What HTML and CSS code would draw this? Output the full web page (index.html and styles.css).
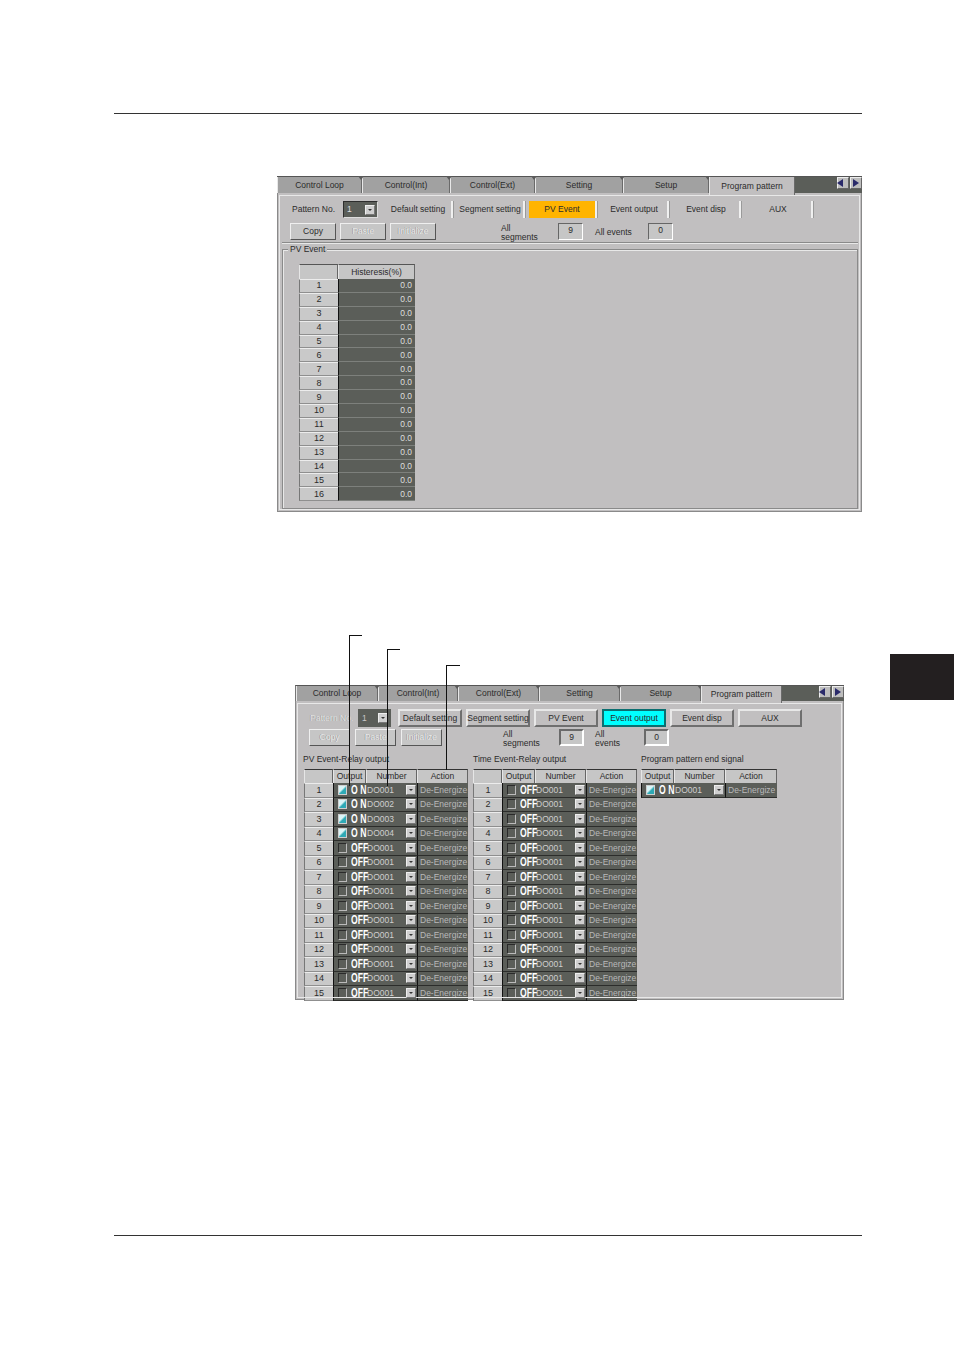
FILE: index.html
```html
<!DOCTYPE html>
<html lang="en">
<head>
<meta charset="utf-8">
<title>Program pattern</title>
<link rel="stylesheet" href="styles.css">
</head>
<body>
<div class="page">
<div class="rule rule-top"></div>

<section class="shot shot-a">
  <div class="tabs tabs-a">
    <div class="tab">Control Loop</div><div class="tab">Control(Int)</div><div class="tab">Control(Ext)</div><div class="tab">Setting</div><div class="tab">Setup</div><div class="tab tab-on">Program pattern</div>
    <div class="tabfill"><span class="arr arr-l"></span><span class="arr arr-r"></span></div>
  </div>
  <div class="panel panel-a">
    <div class="bar bar-a1">
      <span class="lbl lbl-pat">Pattern No.</span>
      <span class="sel"><span>1</span><b class="dd"></b></span>
      <span class="btn flat">Default setting</span><span class="btn flat">Segment setting</span><span class="btn flat orange">PV Event</span><span class="btn flat">Event output</span><span class="btn flat">Event disp</span><span class="btn flat">AUX</span>
    </div>
    <div class="bar bar-a2">
      <span class="btn raised">Copy</span><span class="btn raised dim">Paste</span><span class="btn raised dim">Initialize</span>
      <span class="lbl lbl-seg">All segments</span><span class="val">9</span>
      <span class="lbl lbl-ev">All events</span><span class="val">0</span>
    </div>
    <div class="group">
      <span class="legend">PV Event</span>
      <div class="ptable">
        <div class="h"></div><div class="h">Histeresis(%)</div>
        <div class="i">1</div><div class="v">0.0</div>
        <div class="i">2</div><div class="v">0.0</div>
        <div class="i">3</div><div class="v">0.0</div>
        <div class="i">4</div><div class="v">0.0</div>
        <div class="i">5</div><div class="v">0.0</div>
        <div class="i">6</div><div class="v">0.0</div>
        <div class="i">7</div><div class="v">0.0</div>
        <div class="i">8</div><div class="v">0.0</div>
        <div class="i">9</div><div class="v">0.0</div>
        <div class="i">10</div><div class="v">0.0</div>
        <div class="i">11</div><div class="v">0.0</div>
        <div class="i">12</div><div class="v">0.0</div>
        <div class="i">13</div><div class="v">0.0</div>
        <div class="i">14</div><div class="v">0.0</div>
        <div class="i">15</div><div class="v">0.0</div>
        <div class="i">16</div><div class="v">0.0</div>
      </div>
    </div>
  </div>
</section>

<section class="shot shot-b">
  <i class="callout c1"></i><i class="callout c2"></i><i class="callout c3"></i>
  <div class="tabs tabs-b">
    <div class="tab">Control Loop</div><div class="tab">Control(Int)</div><div class="tab">Control(Ext)</div><div class="tab">Setting</div><div class="tab">Setup</div><div class="tab tab-on">Program pattern</div>
    <div class="tabfill"><span class="arr arr-l"></span><span class="arr arr-r"></span></div>
  </div>
  <div class="panel panel-b">
    <div class="bar bar-b1">
      <span class="lbl lbl-patb dimtext">Pattern No.</span>
      <span class="sel selb"><span>1</span><b class="dd"></b></span>
      <span class="btn box">Default setting</span><span class="btn box">Segment setting</span><span class="btn box">PV Event</span><span class="btn box cyan">Event output</span><span class="btn box">Event disp</span><span class="btn box">AUX</span>
    </div>
    <div class="bar bar-b2">
      <span class="btn raised dim">Copy</span><span class="btn raised dim">Paste</span><span class="btn raised dim">Initialize</span>
      <span class="lbl lbl-segb">All segments</span><span class="val valb">9</span>
      <span class="lbl lbl-evb">All events</span><span class="val valb">0</span>
    </div>
    <div class="tables">
      <div class="tblwrap">
        <div class="ttl">PV Event-Relay output</div>
        <div class="rt">
          <div class="h"></div><div class="h">Output</div><div class="h">Number</div><div class="h">Action</div>
          <div class="i">1</div><div class="o"><span class="cb on"></span><span class="st son">ON</span></div><div class="n">DO001<b class="dd"></b></div><div class="a">De-Energize</div>
          <div class="i">2</div><div class="o"><span class="cb on"></span><span class="st son">ON</span></div><div class="n">DO002<b class="dd"></b></div><div class="a">De-Energize</div>
          <div class="i">3</div><div class="o"><span class="cb on"></span><span class="st son">ON</span></div><div class="n">DO003<b class="dd"></b></div><div class="a">De-Energize</div>
          <div class="i">4</div><div class="o"><span class="cb on"></span><span class="st son">ON</span></div><div class="n">DO004<b class="dd"></b></div><div class="a">De-Energize</div>
          <div class="i">5</div><div class="o"><span class="cb"></span><span class="st">OFF</span></div><div class="n">DO001<b class="dd"></b></div><div class="a">De-Energize</div>
          <div class="i">6</div><div class="o"><span class="cb"></span><span class="st">OFF</span></div><div class="n">DO001<b class="dd"></b></div><div class="a">De-Energize</div>
          <div class="i">7</div><div class="o"><span class="cb"></span><span class="st">OFF</span></div><div class="n">DO001<b class="dd"></b></div><div class="a">De-Energize</div>
          <div class="i">8</div><div class="o"><span class="cb"></span><span class="st">OFF</span></div><div class="n">DO001<b class="dd"></b></div><div class="a">De-Energize</div>
          <div class="i">9</div><div class="o"><span class="cb"></span><span class="st">OFF</span></div><div class="n">DO001<b class="dd"></b></div><div class="a">De-Energize</div>
          <div class="i">10</div><div class="o"><span class="cb"></span><span class="st">OFF</span></div><div class="n">DO001<b class="dd"></b></div><div class="a">De-Energize</div>
          <div class="i">11</div><div class="o"><span class="cb"></span><span class="st">OFF</span></div><div class="n">DO001<b class="dd"></b></div><div class="a">De-Energize</div>
          <div class="i">12</div><div class="o"><span class="cb"></span><span class="st">OFF</span></div><div class="n">DO001<b class="dd"></b></div><div class="a">De-Energize</div>
          <div class="i">13</div><div class="o"><span class="cb"></span><span class="st">OFF</span></div><div class="n">DO001<b class="dd"></b></div><div class="a">De-Energize</div>
          <div class="i">14</div><div class="o"><span class="cb"></span><span class="st">OFF</span></div><div class="n">DO001<b class="dd"></b></div><div class="a">De-Energize</div>
          <div class="i">15</div><div class="o"><span class="cb"></span><span class="st">OFF</span></div><div class="n">DO001<b class="dd"></b></div><div class="a">De-Energize</div>
        </div>
      </div>
      <div class="tblwrap">
        <div class="ttl">Time Event-Relay output</div>
        <div class="rt">
          <div class="h"></div><div class="h">Output</div><div class="h">Number</div><div class="h">Action</div>
          <div class="i">1</div><div class="o"><span class="cb"></span><span class="st">OFF</span></div><div class="n">DO001<b class="dd"></b></div><div class="a">De-Energize</div>
          <div class="i">2</div><div class="o"><span class="cb"></span><span class="st">OFF</span></div><div class="n">DO001<b class="dd"></b></div><div class="a">De-Energize</div>
          <div class="i">3</div><div class="o"><span class="cb"></span><span class="st">OFF</span></div><div class="n">DO001<b class="dd"></b></div><div class="a">De-Energize</div>
          <div class="i">4</div><div class="o"><span class="cb"></span><span class="st">OFF</span></div><div class="n">DO001<b class="dd"></b></div><div class="a">De-Energize</div>
          <div class="i">5</div><div class="o"><span class="cb"></span><span class="st">OFF</span></div><div class="n">DO001<b class="dd"></b></div><div class="a">De-Energize</div>
          <div class="i">6</div><div class="o"><span class="cb"></span><span class="st">OFF</span></div><div class="n">DO001<b class="dd"></b></div><div class="a">De-Energize</div>
          <div class="i">7</div><div class="o"><span class="cb"></span><span class="st">OFF</span></div><div class="n">DO001<b class="dd"></b></div><div class="a">De-Energize</div>
          <div class="i">8</div><div class="o"><span class="cb"></span><span class="st">OFF</span></div><div class="n">DO001<b class="dd"></b></div><div class="a">De-Energize</div>
          <div class="i">9</div><div class="o"><span class="cb"></span><span class="st">OFF</span></div><div class="n">DO001<b class="dd"></b></div><div class="a">De-Energize</div>
          <div class="i">10</div><div class="o"><span class="cb"></span><span class="st">OFF</span></div><div class="n">DO001<b class="dd"></b></div><div class="a">De-Energize</div>
          <div class="i">11</div><div class="o"><span class="cb"></span><span class="st">OFF</span></div><div class="n">DO001<b class="dd"></b></div><div class="a">De-Energize</div>
          <div class="i">12</div><div class="o"><span class="cb"></span><span class="st">OFF</span></div><div class="n">DO001<b class="dd"></b></div><div class="a">De-Energize</div>
          <div class="i">13</div><div class="o"><span class="cb"></span><span class="st">OFF</span></div><div class="n">DO001<b class="dd"></b></div><div class="a">De-Energize</div>
          <div class="i">14</div><div class="o"><span class="cb"></span><span class="st">OFF</span></div><div class="n">DO001<b class="dd"></b></div><div class="a">De-Energize</div>
          <div class="i">15</div><div class="o"><span class="cb"></span><span class="st">OFF</span></div><div class="n">DO001<b class="dd"></b></div><div class="a">De-Energize</div>
        </div>
      </div>
      <div class="tblwrap">
        <div class="ttl">Program pattern end signal</div>
        <div class="rt rt3">
          <div class="h">Output</div><div class="h">Number</div><div class="h">Action</div>
          <div class="o"><span class="cb on"></span><span class="st son">ON</span></div><div class="n">DO001<b class="dd"></b></div><div class="a">De-Energize</div>
        </div>
      </div>
    </div>
  </div>
</section>

<div class="rule rule-bottom"></div>
<div class="sidetab"></div>
</div>
</body>
</html>
```
FILE: styles.css
```css
* { box-sizing: border-box; }
html, body { margin: 0; padding: 0; background: #fff; }
.page { position: relative; height: 1350px; overflow: hidden; padding-top: 113px; font: 8.5px/1 "Liberation Sans", Arial, sans-serif; color: #2b2b2b; }
.rule { height: 1px; width: 748px; margin-left: 114px; background: #333; }
.rule-bottom { margin-top: 235px; }
.sidetab { position: absolute; left: 890px; top: 654px; width: 64px; height: 46px; background: #231f20; }

.shot { position: relative; }
.shot-a { width: 585px; height: 336px; margin: 62px 0 0 277px; }
.shot-b { width: 549px; height: 315px; margin: 173px 0 0 295px; }

.tabs { display: grid; border-top: 1px solid #555; background: #a3a3a3; }
.tabs-a { height: 17px; grid-template-columns: 85px 88px 85px 88px 86px 86px 1fr; }
.tabs-b { height: 16px; grid-template-columns: 82px 80px 81px 81px 81px 81px 1fr; border-left: 1px solid #777; }
.tab { position: relative; display: flex; align-items: center; justify-content: center; background: #a1a1a1; border-left: 1px solid #e8e8e8; border-right: 1px solid #6a6a6a; }
.tab::before { content: ""; position: absolute; top: -1px; right: -3px; z-index: 1; border: 3px solid transparent; border-top: 4px solid #5b5b5b; border-bottom: 0; }
.tab-on { background: #c1bfc0; height: calc(100% + 2px); z-index: 1; }
.tab-on::before { display: none; }
.tabfill { background: #5b5e59; display: flex; justify-content: flex-end; align-items: flex-start; gap: 1px; }
.arr { position: relative; width: 12px; height: 12px; background: #bdbdbd; border: 1px solid #eee; border-right-color: #666; border-bottom-color: #666; }
.arr::after { content: ""; position: absolute; top: 1px; border: 4px solid transparent; }
.arr-l::after { left: -1px; border-left: 0; border-right: 6px solid #2a2a6a; }
.arr-r::after { left: 2px; border-right: 0; border-left: 6px solid #2a2a6a; }

.panel { background: #c1bfc0; border: 1px solid #8a8a8a; border-top: 0; position: relative; }
.panel-a { height: 319px; padding: 8px 2px 4px 3px; outline: 1px solid #e8e8e8; outline-offset: -3px; }
.panel-b { height: 299px; padding: 8px 2px 0 7px; outline: 1px solid #e8e8e8; outline-offset: -3px; }

.bar { display: flex; align-items: stretch; }
.bar-a1 { height: 17px; padding-left: 11px; gap: 4px; }
.bar-a2 { height: 17px; margin-top: 5px; padding: 0 0 0 9px; gap: 4px; border: 0; }
.bar-b1 { height: 18px; padding-left: 7px; gap: 4px; }
.bar-b2 { height: 17px; margin-top: 2px; padding-left: 6px; gap: 5px; }

.lbl { display: flex; align-items: center; }
.lbl-pat { width: 47px; }
.lbl-patb { width: 44px; }
.dimtext { color: #e4e4e4; text-shadow: -.5px -.5px 0 #8b8b8b; }
.lbl-seg { margin: 2px 5px 0 61px; width: 48px; }
.lbl-ev { margin: 2px 11px 0 8px; width: 38px; }
.lbl-segb { margin: 2px 3px 0 56px; width: 48px; }
.lbl-evb { margin: 2px 8px 0 6px; width: 36px; }

.sel { display: flex; align-items: center; justify-content: space-between; width: 35px; margin-right: 3px; padding: 0 2px 0 3px; background: #5b5e59; color: #ddd; border: 1px solid #2d2d2d; border-right-color: #ddd; border-bottom-color: #ddd; }
.selb { width: 33px; margin-right: 3px; color: #c8c8c8; border-color: #5b5e59; }
.dd { position: relative; display: block; flex: none; width: 10px; height: 10px; background: #cfcfcf; border: 1px solid #eee; border-right-color: #777; border-bottom-color: #777; }
.dd::after { content: ""; position: absolute; left: 2px; top: 3px; border: 2px solid transparent; border-top: 2px solid #333; border-bottom: 0; }

.btn { display: flex; align-items: center; justify-content: center; white-space: nowrap; }
.flat { width: 68px; border-right: 2px solid #f0f0f0; box-shadow: 1px 0 0 #9a9a9a; }
.orange { background: #ffb400; }
.raised { width: 46px; background: #c6c6c6; border: 1px solid #efefef; border-right-color: #555; border-bottom-color: #555; }
.dim { color: #eee; text-shadow: -.5px -.5px 0 #808080; }
.bar-b2 .raised { width: 41px; }
.box { width: 64px; border: 2px solid #6f6f6f; border-left-color: #e8e8e8; border-top-color: #e8e8e8; box-shadow: inset 0 0 0 0 #000; }
.cyan { background: #00ffff; border-color: #0c6f70; }
.val { display: flex; align-items: center; justify-content: center; width: 25px; background: #c6c6c6; border: 1px solid #666; border-right-color: #fff; border-bottom-color: #fff; padding-bottom: 3px; }
.valb { border: 2px solid #fff; border-top-color: #6a6a6a; border-left-color: #6a6a6a; padding-bottom: 1px; }

.group { position: relative; height: 260px; margin: 9px 1px 0; border: 1px solid #8a8a8a; box-shadow: inset 1px 1px 0 #e8e8e8; padding: 14px 0 0 16px; }
.group::before { content: ""; position: absolute; left: -1px; right: -1px; top: -8px; height: 1px; background: #8a8a8a; box-shadow: 0 1px 0 #e8e8e8; }
.legend { position: absolute; left: 5px; top: -5px; padding: 0 2px; background: #c1bfc0; font-size: 8.5px; }
.ptable { display: grid; grid-template-columns: 39px 77px; grid-template-rows: 15px repeat(16, 13.9px); width: 116px; }

.h { display: flex; align-items: center; justify-content: center; background: #c6c6c6; border-top: 1px solid #555; border-left: 1px solid #e6e6e6; border-right: 1px solid #666; }
.i { display: flex; align-items: center; justify-content: center; background: #c9c9c9; border-left: 1px solid #777; border-bottom: 1px solid #8f8f8f; border-top: 1px solid #ececec; font-size: 9px; }
.v { display: flex; align-items: center; justify-content: flex-end; padding-right: 3px; background: #5b5e59; color: #dedede; border-left: 1px solid #111; border-bottom: 1px solid #7d807c; }

.tables { display: flex; gap: 4px; margin-top: 7px; padding-left: 0; }
.ttl { height: 16px; padding: 2px 0 0 0; white-space: nowrap; }
.rt { display: grid; grid-template-columns: 29px 33px 51px 51px; grid-template-rows: 14px repeat(15, 14.5px); width: 164px; }
.rt3 { grid-template-columns: 33px 51px 52px; grid-template-rows: 14px 14.5px; width: 136px; }
.tblwrap:nth-child(1) .rt { margin-left: 1px; }
.tblwrap:nth-child(1) { margin-right: 1px; }
.tblwrap:nth-child(2) { margin-left: 0; }
.rt .h { border-top: 1px solid #333; }
.o { display: flex; align-items: center; gap: 4px; padding-left: 4px; background: #5b5e59; color: #fff; border-left: 1px solid #111; border-bottom: 1px solid #2c2d2b; }
.n { display: flex; align-items: center; justify-content: space-between; padding: 0 1px 0 1px; background: #5b5e59; color: #cfcfcf; border-bottom: 1px solid #2c2d2b; }
.a { display: flex; align-items: center; padding-left: 2px; background: #5b5e59; color: #b9b9b9; border-left: 1px solid #111; border-bottom: 1px solid #2c2d2b; white-space: nowrap; }
.cb { display: block; flex: none; width: 9px; height: 10px; background: #5b5e59; border: 1px solid #2a2a2a; border-right-color: #bbb; border-bottom-color: #bbb; }
.cb.on { background: linear-gradient(135deg, #d9f4f6 0 42%, #2ea9b5 58% 100%); border-color: #cfcfcf; }
.st { display: inline-block; font-weight: 700; font-size: 12px; letter-spacing: 0; transform: scaleX(.72); transform-origin: 0 50%; }
.son { letter-spacing: 3.5px; }

.callout { position: absolute; border-left: 1px solid #111; border-top: 1px solid #111; z-index: 3; }
.c1 { left: 54px; top: -50px; width: 13px; height: 151px; }
.c2 { left: 92px; top: -36px; width: 13px; height: 137px; }
.c3 { left: 151px; top: -20px; width: 14px; height: 105px; }
```
